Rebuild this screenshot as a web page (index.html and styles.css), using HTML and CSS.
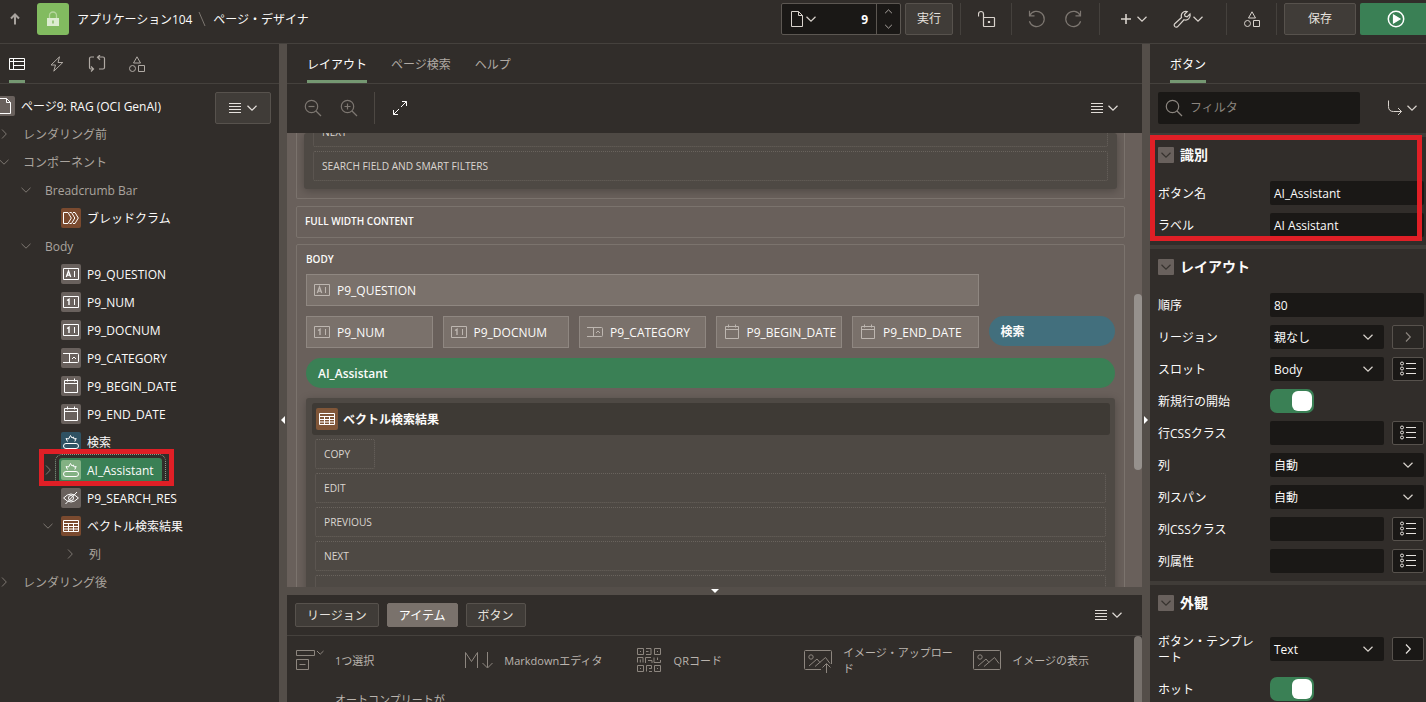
FILE: index.html
```html
<!DOCTYPE html>
<html lang="ja">
<head>
    <meta charset="UTF-8">
    <meta name="viewport" content="width=device-width, initial-scale=1.0">
    <title>ページ・デザイナ</title>
    <link rel="stylesheet" href="styles.css">
</head>
<body>
    <!-- icon sprite -->
    <svg class="sprite">
        <symbol id="i-down" viewBox="0 0 12 12"><path d="M1.500 3.800 6 8.200l4.500-4.400"/></symbol>
        <symbol id="i-right" viewBox="0 0 12 12"><path d="M4 1.500 8.300 6 4 10.500"/></symbol>
        <symbol id="i-menu" viewBox="0 0 12 12"><path d="M0 1.500h12M0 4.500h12M0 7.500h12M0 10.500h12" stroke-width="1"/></symbol>
        <symbol id="i-page" viewBox="0 0 16 16"><path d="M2.500.5h7l4 4v11h-11zM9.500.5v4h4"/></symbol>
        <symbol id="i-shapes" viewBox="0 0 16 16"><path d="M8 .8 11.500 7h-7zM9.500 9.500h6v6h-6z"/><circle cx="3.500" cy="12.500" r="3"/></symbol>
        <symbol id="i-text" viewBox="0 0 16 16"><path d="M.5 2.500h15v11H.5zM11.500 5v6"/><path d="M3.300 11 5.500 5l2.200 6M4.100 9.200h2.800" stroke-width="1.300"/></symbol>
        <symbol id="i-num" viewBox="0 0 16 16"><path d="M.5 2.500h15v11H.5zM11.500 5v6"/><path d="M4 6.500 6 5.300V11" stroke-width="1.400"/></symbol>
        <symbol id="i-select" viewBox="0 0 16 16"><path d="M0 3.500h14.500q1 0 1 1v7q0 1-1 1H0M6.500 3.500v9M9 9l2-2 2 2"/></symbol>
        <symbol id="i-cal" viewBox="0 0 16 16"><path d="M1.500 2.500h13v12h-13zM1.500 5.500h13M4.500.5v3M11.500.5v3"/></symbol>
        <symbol id="i-button" viewBox="0 0 16 16"><rect x=".5" y="9.500" width="15" height="5" rx="2.500"/><path d="M4.500 7.500 3 4.500l2.500.5L7.500 1.500 9 4l1.500-1 .5 2 2.200-.5L11.800 7.500"/></symbol>
        <symbol id="i-hidden" viewBox="0 0 16 16"><path d="M.6 8Q8 0 15.400 8 8 16 .6 8zM2.500 14 14 2"/><circle cx="8" cy="8" r="2.500"/></symbol>
        <symbol id="i-table" viewBox="0 0 16 16"><path d="M.5 2.500h15v11H.5zM.5 5.500h15M.5 8.500h15M.5 11h15M5.500 5.500v8M10.500 5.500v8"/></symbol>
        <symbol id="i-crumb" viewBox="0 0 16 16"><path d="M.5 2.500h4.500L8.300 8 5 13.500H.5zM6.500 2.500h2L11.800 8l-3.300 5.500h-2M10 2.500h2L15.300 8 12 13.500h-2"/></symbol>
        <symbol id="i-list" viewBox="0 0 16 16"><path d="M6 2.500h10M6 7.500h10M6 12.500h10"/><circle cx="2" cy="2.500" r="1.500"/><circle cx="2" cy="7.500" r="1.500"/><circle cx="2" cy="12.500" r="1.500"/></symbol>
        <symbol id="i-zoom" viewBox="0 0 18 18"><circle cx="7.500" cy="7.500" r="6.200"/><path d="m12 12 5 5"/></symbol>
        <symbol id="i-undo" viewBox="0 0 18 18"><path d="M1.500.8v5h5M1.800 5.600a7.600 7.600 0 1 1-.4 5.600"/></symbol>
        <symbol id="i-image" viewBox="0 0 30 26"><circle cx="8" cy="10" r="2.200"/><path d="m6 19 8-7 3 3.500M12 19.500l10.500-9 4.500 6"/></symbol>
    </svg>

    <header class="header">
        <svg class="icon up" viewBox="0 0 12 12"><path d="M6 11.500V1.500M2 5.500l4-4 4 4" stroke-width="2"/></svg>
        <div class="app-icon"><svg viewBox="0 0 16 16"><path d="M2 7h12v8H2z" fill="#dcecd0"/><path d="M4.500 7V4.500a3.500 3.500 0 0 1 7 0V7" fill="none" stroke="#b5d69d" stroke-width="1.300"/><path d="M7.300 9.500h1.400v3H7.300z" fill="#82bb60"/></svg></div>
        <span class="app-name">アプリケーション104</span>
        <svg class="slash" viewBox="0 0 8 16"><path d="m1 1 6 14"/></svg>
        <span class="crumb">ページ・デザイナ</span>
        <div class="tools">
            <div class="page-select">
                <svg class="icon i16"><use href="#i-page"/></svg>
                <svg class="icon i12"><use href="#i-down"/></svg>
                <b>9</b>
                <div class="spin"><svg class="icon i8 flip"><use href="#i-down"/></svg><svg class="icon i8"><use href="#i-down"/></svg></div>
            </div>
            <button class="btn run">実行</button>
            <div class="tool t-lock"><svg class="icon i18" viewBox="0 0 18 18"><path d="M5.500 7.500h10.500q.5 0 .5.500v8q0 .5-.5.500H6q-.5 0-.5-.5zM5.500 7.500V4a2.500 2.500 0 0 0-5 0v2.500M10.500 11.500h1v1h-1z"/></svg></div>
            <div class="tool t-undo dim"><svg class="icon i18"><use href="#i-undo"/></svg><svg class="icon i18 mirror"><use href="#i-undo"/></svg></div>
            <div class="tool t-add">
                <svg class="icon i12" viewBox="0 0 12 12"><path d="M6 1v10M1 6h10" stroke-width="1.600"/></svg><svg class="icon i12"><use href="#i-down"/></svg>
                <svg class="icon i18 wrench" viewBox="0 0 18 18"><path d="m1.500 14 7-6.500c-1-3.500 1.500-7 5.700-6L11.500 4.300l.6 2 2 .6L17 4c.8 4-2.500 7-6 5.800L4.500 16.800q-1.500.9-2.600-.2-1.200-1.300-.4-2.600z"/></svg><svg class="icon i12"><use href="#i-down"/></svg>
            </div>
            <div class="tool t-shapes"><svg class="icon i16"><use href="#i-shapes"/></svg></div>
            <div class="tool last"><button class="btn save">保存</button></div>
            <button class="btn play"><svg class="icon i18" viewBox="0 0 18 18"><circle cx="9" cy="9" r="7.700" stroke-width="1.500"/><path d="m6.500 5 6.500 4-6.500 4z" fill="currentColor"/></svg></button>
        </div>
    </header>

    <main class="main">
        <section class="left">
            <nav class="tabs icon-tabs">
                <a class="tab active"><svg class="icon i16" viewBox="0 0 16 16"><path d="M.5 2.500h15v11H.5zM.5 5.500h15M4.500 2.500v11M4.500 9.500h11"/></svg></a>
                <a class="tab"><svg class="icon i16" viewBox="0 0 16 16"><path d="M10.500.8 2 9h4.500L4.800 15.200 13.800 6.500H9z"/></svg></a>
                <a class="tab"><svg class="icon i18" viewBox="0 0 18 18"><path d="M6 2H3Q1.500 2 1.500 3.500v9Q1.500 14 3 14h2M3 11.500l2.500 2.500L3 16.500M11 14h4q1.500 0 1.500-1.500v-9Q16.500 2 15 2H9.500M12 0 9.500 2.300 12 4.700"/></svg></a>
                <a class="tab"><svg class="icon i16"><use href="#i-shapes"/></svg></a>
            </nav>
            <div class="tree">
                <button class="btn tree-menu"><svg class="icon i12"><use href="#i-menu"/></svg><svg class="icon i12"><use href="#i-down"/></svg></button>
                <div class="node root"><span class="badge"><svg class="icon i16"><use href="#i-page"/></svg></span>ページ9: RAG (OCI GenAI)</div>
                <div class="node group l0"><svg class="icon caret"><use href="#i-right"/></svg>レンダリング前</div>
                <div class="node group l0"><svg class="icon caret"><use href="#i-down"/></svg>コンポーネント</div>
                <div class="node group l1"><svg class="icon caret"><use href="#i-down"/></svg>Breadcrumb Bar</div>
                <div class="node l2"><i class="caret"></i><span class="badge brown"><svg class="icon i16"><use href="#i-crumb"/></svg></span>ブレッドクラム</div>
                <div class="node group l1"><svg class="icon caret"><use href="#i-down"/></svg>Body</div>
                <div class="node l2"><i class="caret"></i><span class="badge"><svg class="icon i16"><use href="#i-text"/></svg></span>P9_QUESTION</div>
                <div class="node l2"><i class="caret"></i><span class="badge"><svg class="icon i16"><use href="#i-num"/></svg></span>P9_NUM</div>
                <div class="node l2"><i class="caret"></i><span class="badge"><svg class="icon i16"><use href="#i-num"/></svg></span>P9_DOCNUM</div>
                <div class="node l2"><i class="caret"></i><span class="badge"><svg class="icon i16"><use href="#i-select"/></svg></span>P9_CATEGORY</div>
                <div class="node l2"><i class="caret"></i><span class="badge"><svg class="icon i16"><use href="#i-cal"/></svg></span>P9_BEGIN_DATE</div>
                <div class="node l2"><i class="caret"></i><span class="badge"><svg class="icon i16"><use href="#i-cal"/></svg></span>P9_END_DATE</div>
                <div class="node l2"><i class="caret"></i><span class="badge blue"><svg class="icon i16"><use href="#i-button"/></svg></span>検索</div>
                <div class="node l2"><svg class="icon caret"><use href="#i-right"/></svg><div class="selected"><span class="badge light"><svg class="icon i16"><use href="#i-button"/></svg></span>AI_Assistant</div><div class="mark"></div></div>
                <div class="node l2"><i class="caret"></i><span class="badge"><svg class="icon i16"><use href="#i-hidden"/></svg></span>P9_SEARCH_RES</div>
                <div class="node l2"><svg class="icon caret"><use href="#i-down"/></svg><span class="badge brown"><svg class="icon i16"><use href="#i-table"/></svg></span>ベクトル検索結果</div>
                <div class="node group l3"><svg class="icon caret"><use href="#i-right"/></svg>列</div>
                <div class="node group l0"><svg class="icon caret"><use href="#i-right"/></svg>レンダリング後</div>
            </div>
        </section>

        <div class="splitter"><span class="arrow a-left"></span></div>

        <section class="center">
            <nav class="tabs">
                <a class="tab active">レイアウト</a>
                <a class="tab">ページ検索</a>
                <a class="tab">ヘルプ</a>
            </nav>
            <div class="toolbar">
                <svg class="icon i18 dim" viewBox="0 0 18 18"><use href="#i-zoom"/><path d="M4.500 7.500h6"/></svg>
                <svg class="icon i18 dim" viewBox="0 0 18 18"><use href="#i-zoom"/><path d="M4.500 7.500h6M7.500 4.500v6"/></svg>
                <span class="sep"></span>
                <svg class="icon i16" viewBox="0 0 16 16"><path d="M9 7l5.500-5.500M10 1.500h4.500V6M7 9l-5.500 5.500M1.500 10v4.500H6"/></svg>
                <div class="menu"><svg class="icon i12"><use href="#i-menu"/></svg><svg class="icon i12"><use href="#i-down"/></svg></div>
            </div>
            <div class="canvas">
                <div class="slot slot-top">
                    <div class="region">
                        <div class="sub">NEXT</div>
                        <div class="sub">SEARCH FIELD AND SMART FILTERS</div>
                    </div>
                </div>
                <div class="slot full"><b>FULL WIDTH CONTENT</b></div>
                <div class="slot body">
                    <b>BODY</b>
                    <div class="grid">
                        <div class="item wide"><svg class="icon i16"><use href="#i-text"/></svg>P9_QUESTION</div>
                        <div class="item first"><svg class="icon i16"><use href="#i-num"/></svg>P9_NUM</div>
                        <div class="item"><svg class="icon i16"><use href="#i-num"/></svg>P9_DOCNUM</div>
                        <div class="item"><svg class="icon i16"><use href="#i-select"/></svg>P9_CATEGORY</div>
                        <div class="item"><svg class="icon i16"><use href="#i-cal"/></svg>P9_BEGIN_DATE</div>
                        <div class="item"><svg class="icon i16"><use href="#i-cal"/></svg>P9_END_DATE</div>
                        <div class="pill">検索</div>
                        <div class="pill hot">AI_Assistant</div>
                        <div class="region result">
                            <div class="region-title"><span class="badge brown"><svg class="icon i16"><use href="#i-table"/></svg></span>ベクトル検索結果</div>
                            <div class="sub copy">COPY</div>
                            <div class="sub">EDIT</div>
                            <div class="sub">PREVIOUS</div>
                            <div class="sub">NEXT</div>
                            <div class="sub"></div>
                        </div>
                    </div>
                </div>
                <span class="thumb"></span>
            </div>
            <div class="h-splitter"><span class="arrow a-down"></span></div>
            <div class="gallery-bar">
                <button class="btn">リージョン</button>
                <button class="btn on">アイテム</button>
                <button class="btn">ボタン</button>
                <div class="menu"><svg class="icon i12"><use href="#i-menu"/></svg><svg class="icon i12"><use href="#i-down"/></svg></div>
            </div>
            <div class="gallery">
                <div class="g-item"><svg class="icon" viewBox="0 0 30 26"><path d="M1.500 3.500h18v5h-18zM1.500 12.500h12v10h-12zM4.500 17.500h6M22 4l3.200 3.200L28.500 4"/></svg><span>1つ選択</span></div>
                <div class="g-item"><svg class="icon" viewBox="0 0 30 26"><path d="M1.500 21V5.500l6 9 6-9V21M23.500 5v15.500M18.500 16l5 5 5-5"/></svg><span>Markdownエディタ</span></div>
                <div class="g-item"><svg class="icon" viewBox="0 0 30 26"><path d="M3.500 1.500h6v6h-6zM20.500 1.500h6v6h-6zM3.500 18.500h6v6h-6zM6 4.500h1M23 4.500h1M6 21.500h1M20.500 18.500h6v6h-6zM23 21.500h1M12 1.500h5v6h-5M12 4.500h2.500M3.500 15.500v-5h5.500v5M6.300 12.500v3M11.500 16v-5.500h5.500M14 13.500h4v2.500M20 10.500v5h6.500v-2.500M23.500 10.500v2.500M12.500 18.500v6M12.500 18.500h5v3H15M15 24.500h3"/></svg><span>QRコード</span></div>
                <div class="g-item"><svg class="icon" viewBox="0 0 30 26"><path d="M18 22.500H2.500q-1 0-1-1v-17q0-1 1-1h25q1 0 1 1V17"/><use href="#i-image"/><path d="M23.500 26v-9M19.500 20.500l4-4 4 4"/></svg><span>イメージ・アップロード</span></div>
                <div class="g-item"><svg class="icon" viewBox="0 0 30 26"><rect x="1.500" y="3.500" width="27" height="19" rx="1"/><use href="#i-image"/></svg><span>イメージの表示</span></div>
                <div class="g-item second"><span>オートコンプリートがあるテキスト</span></div>
                <span class="thumb"></span>
            </div>
        </section>

        <div class="splitter"><span class="arrow a-right"></span></div>

        <section class="right">
            <nav class="tabs"><a class="tab active">ボタン</a></nav>
            <div class="filter">
                <div class="search"><svg class="icon i18"><use href="#i-zoom"/></svg>フィルタ</div>
                <svg class="icon i16" viewBox="0 0 16 16"><path d="M1.500.5v6q0 5 5 5h8M11 8l3.500 3.500L11 15"/></svg>
                <svg class="icon i12"><use href="#i-down"/></svg>
            </div>
            <div class="props">
                <div class="group-title"><span class="toggle-box"><svg class="icon i12"><use href="#i-down"/></svg></span>識別</div>
                <div class="prop"><label>ボタン名</label><div class="field">AI_Assistant</div></div>
                <div class="prop"><label>ラベル</label><div class="field">AI Assistant</div></div>
                <div class="mark"></div>
            </div>
            <div class="props">
                <div class="group-title"><span class="toggle-box"><svg class="icon i12"><use href="#i-down"/></svg></span>レイアウト</div>
                <div class="prop"><label>順序</label><div class="field">80</div></div>
                <div class="prop"><label>リージョン</label><div class="field">親なし<svg class="icon i12"><use href="#i-down"/></svg></div><div class="side off"><svg class="icon i12"><use href="#i-right"/></svg></div></div>
                <div class="prop"><label>スロット</label><div class="field">Body<svg class="icon i12"><use href="#i-down"/></svg></div><div class="side"><svg class="icon i16"><use href="#i-list"/></svg></div></div>
                <div class="prop"><label>新規行の開始</label><div class="switch"></div></div>
                <div class="prop"><label>行CSSクラス</label><div class="field"></div><div class="side"><svg class="icon i16"><use href="#i-list"/></svg></div></div>
                <div class="prop"><label>列</label><div class="field">自動<svg class="icon i12"><use href="#i-down"/></svg></div></div>
                <div class="prop"><label>列スパン</label><div class="field">自動<svg class="icon i12"><use href="#i-down"/></svg></div></div>
                <div class="prop"><label>列CSSクラス</label><div class="field"></div><div class="side"><svg class="icon i16"><use href="#i-list"/></svg></div></div>
                <div class="prop"><label>列属性</label><div class="field"></div><div class="side"><svg class="icon i16"><use href="#i-list"/></svg></div></div>
            </div>
            <div class="props">
                <div class="group-title"><span class="toggle-box"><svg class="icon i12"><use href="#i-down"/></svg></span>外観</div>
                <div class="prop tall"><label>ボタン・テンプレート</label><div class="field">Text<svg class="icon i12"><use href="#i-down"/></svg></div><div class="side"><svg class="icon i12"><use href="#i-right"/></svg></div></div>
                <div class="prop"><label>ホット</label><div class="switch"></div></div>
            </div>
        </section>
    </main>
</body>
</html>
```
FILE: styles.css
```css
* {
    box-sizing: border-box;
}

body {
    margin: 0;
    height: 702px;
    overflow: hidden;
    display: flex;
    flex-direction: column;
    background-color: #312d2a;
    color: #fcfbfa;
    font-family: "Open Sans", "Noto Sans CJK JP", sans-serif;
    font-size: 12px;
    line-height: 16px;
}

.sprite {
    position: absolute;
    width: 0;
    height: 0;
}

.icon {
    flex: none;
    fill: none;
    stroke: currentColor;
    stroke-width: 1;
}

.i8 { width: 9px; height: 9px; }
.i12 { width: 12px; height: 12px; stroke-width: 1.2; }
.i16 { width: 16px; height: 16px; }
.i18 { width: 18px; height: 18px; stroke-width: 1.2; }
.flip { transform: scaleY(-1); }
.mirror { transform: scaleX(-1); }

.btn {
    display: flex;
    align-items: center;
    justify-content: center;
    background-color: #403c38;
    border: 1px solid #57524d;
    border-radius: 2px;
    color: #e6e2de;
    font: inherit;
    padding: 0;
}

/* header */
.header {
    display: flex;
    align-items: center;
    height: 44px;
    flex: none;
    padding: 0 0 5px 9px;
    border-bottom: 1px solid #45413d;
}

.up {
    width: 12px;
    height: 12px;
    color: #a8a39e;
}

.app-icon {
    width: 32px;
    height: 32px;
    margin: 0 8px 0 16px;
    border-radius: 3px;
    background-color: #82bb60;
    display: flex;
    align-items: center;
    justify-content: center;
}

.app-icon svg {
    width: 16px;
    height: 16px;
}

.app-name, .crumb {
    padding-top: 2px;
}

.app-name {
    letter-spacing: -0.1px;
}

.slash {
    width: 8px;
    height: 16px;
    margin: 0 7px 0 6px;
    fill: none;
    stroke: #7b756f;
}

.tools {
    display: flex;
    margin-left: auto;
    color: #d9d3cd;
}

.page-select {
    display: flex;
    align-items: center;
    width: 120px;
    height: 32px;
    margin-right: 4px;
    padding-left: 7px;
    background-color: #1a1816;
    border: 1px solid #5c5752;
    border-radius: 2px;
}

.page-select b {
    flex: 1;
    text-align: right;
    padding: 2px 8px 0 0;
    color: #fff;
}

.spin {
    display: flex;
    flex-direction: column;
    align-items: center;
    justify-content: space-between;
    width: 24px;
    height: 30px;
    padding: 3px 0;
    border-left: 1px solid #5c5752;
}

.run {
    width: 48px;
    height: 32px;
    margin-right: 7px;
}

.tool {
    display: flex;
    align-items: center;
    height: 32px;
    border-left: 1px solid #45413d;
}

.t-lock { width: 51px; padding-left: 17px; }
.t-undo { width: 88px; padding-left: 16px; gap: 18px; }
.t-add { width: 127px; padding-left: 20px; gap: 4px; }
.t-shapes { width: 50px; padding-left: 17px; }
.wrench { margin-left: 21px; margin-right: -3px; }

.dim {
    color: #7d7771;
}

.last {
    padding: 0 4px 0 7px;
}

.save {
    width: 72px;
    height: 32px;
}

.play {
    width: 66px;
    height: 32px;
    padding-left: 6px;
    border: none;
    border-radius: 2px 0 0 2px;
    background-color: #3a8055;
    color: #fff;
}

/* columns */
.main {
    display: flex;
    flex: 1;
    min-height: 0;
}

.left {
    width: 279px;
    flex: none;
}

.center {
    width: 855px;
    flex: none;
    display: flex;
    flex-direction: column;
}

.right {
    width: 276px;
    flex: none;
}

.splitter {
    width: 8px;
    flex: none;
    background-color: #544e49;
    position: relative;
}

.arrow {
    position: absolute;
    border: 4px solid transparent;
}

.a-left {
    top: 372px;
    left: -2px;
    border-right-color: #fff;
}

.a-right {
    top: 372px;
    left: 2px;
    border-left-color: #fff;
}

.a-down {
    top: 2px;
    left: 424px;
    border-top-color: #fff;
}

.tabs {
    display: flex;
    flex: none;
    height: 40px;
    padding: 0 20px;
    gap: 24px;
    border-bottom: 1px solid #45413d;
}

.tab {
    display: flex;
    align-items: center;
    height: 39px;
    padding-top: 5px;
    border-bottom: 3px solid transparent;
    color: #b0aaa4;
}

.tab.active {
    border-bottom-color: #759872;
    color: #fff;
}

.icon-tabs {
    padding: 0 9px;
}

.icon-tabs .tab {
    padding-top: 4px;
}

.icon-tabs .i18 {
    margin: 0 -1px;
}

/* page tree */
.tree {
    position: relative;
    padding-top: 8px;
}

.tree-menu {
    position: absolute;
    top: 8px;
    right: 8px;
    width: 56px;
    height: 32px;
    gap: 5px;
}

.node {
    display: flex;
    align-items: center;
    height: 28px;
    padding-top: 2px;
    position: relative;
    white-space: nowrap;
}

.node > .icon,
.node > .badge,
.node > .selected {
    margin-top: -2px;
}

.root {
    margin-left: -5px;
}

.caret {
    width: 12px;
    height: 12px;
    flex: none;
    color: #7d7771;
    margin-right: 7px;
}

.group {
    color: #aaa49e;
}

.group .caret {
    margin-right: 13px;
}

.l0 { padding-left: 0; margin-left: -2px; }
.l1 { padding-left: 20px; }
.l2 { padding-left: 42px; }
.l3 { padding-left: 64px; }

.badge {
    display: flex;
    align-items: center;
    justify-content: center;
    width: 20px;
    height: 20px;
    margin-right: 6px;
    flex: none;
    border-radius: 2px;
    background-color: #69615d;
    color: #fff;
}

.badge.brown { background-color: #7a4a2f; }
.badge.blue { background-color: #2f5263; }
.badge.light { background-color: #83b183; }

.selected {
    display: flex;
    align-items: center;
    width: 103px;
    height: 24px;
    margin-left: -2px;
    padding: 2px 0 0 2px;
    border-radius: 3px;
    background-color: #3a8055;
    outline: 1px dotted #85a08a;
    outline-offset: 3px;
}

.selected .badge {
    margin-top: -2px;
}

.mark {
    position: absolute;
    border: 5px solid #e01f26;
}

.tree .mark {
    left: 39px;
    top: -7px;
    width: 135px;
    height: 37px;
}

/* layout editor */
.toolbar {
    display: flex;
    align-items: center;
    height: 49px;
    flex: none;
    padding: 0 23px 1px 17px;
}

.toolbar .i18 + .i18 {
    margin-left: 18px;
}

.sep {
    width: 1px;
    height: 32px;
    margin: 0 17px 0 16px;
    background-color: #4d4843;
}

.menu {
    display: flex;
    gap: 4px;
    margin-left: auto;
    color: #e0dbd6;
}

.canvas {
    position: relative;
    height: 454px;
    flex: none;
    overflow: hidden;
    padding: 0 17px 0 9px;
    background-color: #69605b;
}

.slot {
    border: 1px solid #7b736d;
    border-radius: 2px;
    font-size: 10px;
}

.slot b {
    font-weight: 600;
}

.slot-top {
    height: 66px;
    padding: 0 7px;
    border-top: none;
    border-radius: 0 0 2px 2px;
}

.region {
    background-color: #4e4944;
    border-radius: 3px;
    box-shadow: 0 2px 8px rgba(0, 0, 0, 0.25);
}

.slot-top .region {
    height: 56px;
    padding: 0 9px;
    overflow: hidden;
}

.slot-top .sub:first-child {
    margin-top: -16px;
}

.sub {
    height: 30px;
    margin-bottom: 4px;
    padding: 6px 8px;
    border: 1px dotted #69635d;
    border-radius: 2px;
    color: #dad5d0;
    font-size: 10.2px;
    font-weight: 500;
}

.full {
    height: 32px;
    margin: 7px 0 6px;
    padding: 6px 8px;
}

.body {
    height: 400px;
    padding: 6px 9px;
}

.grid {
    display: grid;
    grid-template-columns: repeat(6, 1fr);
    grid-template-rows: 32px 32px 30px;
    gap: 10px;
    margin-top: 7px;
}

.item {
    display: flex;
    align-items: center;
    gap: 7px;
    min-width: 0;
    padding: 2px 0 0 7px;
    border: 1px solid #8f8781;
    background-color: #7a716b;
    font-size: 12px;
    white-space: nowrap;
}

.item .icon {
    margin-top: -2px;
    color: #bdb6b0;
}

.item.wide {
    grid-column: 1 / 6;
}

.item.first {
    grid-column: 1;
}

.pill {
    grid-column: 6;
    height: 30px;
    padding: 8px 12px;
    border-radius: 15px;
    background-color: #426f7d;
    font-size: 12px;
    font-weight: 600;
}

.pill.hot {
    grid-column: 1 / 7;
    background-color: #3a8055;
}

.result {
    grid-column: 1 / 7;
    height: 300px;
    padding: 5px 9px 0;
}

.region-title {
    display: flex;
    align-items: center;
    height: 32px;
    margin: 0 -4px 4px -3px;
    padding: 2px 0 0 4px;
    border-radius: 3px;
    background-color: #3e3a35;
    font-size: 12px;
    font-weight: bold;
}

.region-title .badge {
    width: 22px;
    height: 22px;
    margin: -2px 5px 0 0;
    background-color: #805638;
}

.copy {
    width: 60px;
}

.thumb {
    position: absolute;
    top: 161px;
    right: 0;
    width: 8px;
    height: 176px;
    border-radius: 4px;
    background-color: #96918d;
}

.h-splitter {
    position: relative;
    height: 8px;
    flex: none;
    background-color: #544e49;
}

/* gallery */
.gallery-bar {
    display: flex;
    align-items: center;
    gap: 8px;
    height: 41px;
    flex: none;
    padding: 0 19px 0 8px;
    border-bottom: 1px solid #45413d;
}

.gallery-bar .btn {
    height: 24px;
    padding: 2px 11px 0;
}

.gallery-bar .on {
    background-color: #7a726c;
    border-color: #7a726c;
    color: #fff;
}

.gallery {
    position: relative;
    display: grid;
    grid-template-columns: repeat(5, 169.3px);
    grid-template-rows: 48px 40px;
    flex: 1;
    min-height: 0;
    overflow: hidden;
    padding-left: 8px;
    color: #bab4ae;
    font-size: 11px;
}

.g-item {
    display: flex;
    align-items: center;
    gap: 10px;
}

.g-item .icon {
    width: 30px;
    height: 26px;
    color: #8d867f;
}

.g-item span {
    width: 115px;
    padding-top: 1px;
    line-break: anywhere;
}

.second {
    align-items: flex-start;
    padding: 7px 0 0 40px;
}

.gallery .thumb {
    top: 0;
    height: 90px;
    background-color: #77716c;
}

/* property editor */
.filter {
    display: flex;
    align-items: center;
    height: 49px;
    padding: 0 0 1px 8px;
    color: #d9d3cd;
}

.search {
    display: flex;
    align-items: center;
    gap: 7px;
    width: 202px;
    height: 32px;
    margin-right: 27px;
    padding-left: 7px;
    border-radius: 2px;
    background-color: #1a1816;
    color: #8b857f;
}

.filter > .i12 {
    margin-left: 3px;
}

.props {
    position: relative;
    padding: 0 2px 4px 8px;
    border-top: 4px solid #403c38;
}

.group-title {
    display: flex;
    align-items: center;
    gap: 6px;
    height: 40px;
    padding-bottom: 4px;
    font-size: 14px;
    font-weight: bold;
}

.toggle-box {
    display: flex;
    align-items: center;
    justify-content: center;
    width: 16px;
    height: 16px;
    border-radius: 1px;
    background-color: #69615d;
    color: #37332f;
}

.prop {
    display: flex;
    align-items: center;
    height: 32px;
}

.prop label {
    width: 98px;
    margin-right: 14px;
    padding-top: 2px;
    flex: none;
}

.prop.tall {
    height: 48px;
}

.field {
    display: flex;
    align-items: center;
    justify-content: space-between;
    flex: 1;
    height: 24px;
    padding: 2px 10px 0 4px;
    border-radius: 2px;
    background-color: #1a1816;
}

.field .icon {
    margin-top: -2px;
    color: #d9d3cd;
}

.side {
    display: flex;
    align-items: center;
    justify-content: center;
    width: 32px;
    height: 24px;
    margin-left: 8px;
    border: 1px solid #57524d;
    border-radius: 2px;
    background-color: #1a1816;
    color: #e6e2de;
}

.side.off {
    background-color: #2a2724;
    color: #8b857f;
}

.switch {
    width: 44px;
    height: 24px;
    padding: 2px;
    border-radius: 7px;
    background-color: #3a8055;
}

.switch::after {
    content: "";
    display: block;
    width: 20px;
    height: 20px;
    margin-left: auto;
    border-radius: 6px;
    background-color: #fff;
}

.props .mark {
    left: 0;
    top: -2px;
    width: 272px;
    height: 106px;
}
```
